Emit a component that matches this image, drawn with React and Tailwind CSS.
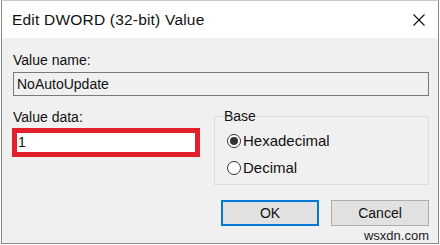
export default function App() {
  const font = { fontFamily: '"Liberation Sans", Arial, sans-serif' };
  return (
    <div className="w-[440px] h-[245px] bg-white relative overflow-hidden" style={font}>
      <div className="ml-[1px] w-[438px] h-[244px] border-x border-b border-t border-[#8a8a8a] border-t-[#c8c8c8] flex flex-col">
        <div className="h-[37px] bg-white flex items-center justify-between pl-[10px] pr-[10px] shrink-0">
          <span className="text-[15.5px] text-[#111] tracking-[0.2px]">Edit DWORD (32-bit) Value</span>
          <svg width="12" height="12" viewBox="0 0 12 12" className="mr-[3px]">
            <path d="M0.5 0.5 L11.5 11.5 M11.5 0.5 L0.5 11.5" stroke="#111" strokeWidth="1.1" />
          </svg>
        </div>
        <div className="flex-1 bg-[#f0f0f0] pl-[11px] pr-[9px] flex flex-col text-[14px] text-[#111]">
          <div className="mt-[14px] leading-[17px]">Value name:</div>
          <div className="mt-[3px] h-[24px] border border-[#7a7a7a] bg-[#f0f0f0] flex items-center pl-[3px] leading-none">NoAutoUpdate</div>
          <div className="flex mt-[20px] justify-between">
            <div className="flex flex-col">
              <div className="leading-[17px] -mt-[7px]">Value data:</div>
              <div className="mt-[2px] -ml-[1px] w-[188px] h-[29px] border-[5px] border-[#e2202c] bg-white flex items-center pl-[1px]">1</div>
            </div>
            <fieldset className="w-[215px] h-[77px] border border-[#dcdcdc] -mt-[8px] px-[12px]">
              <legend className="ml-[-4px] px-[1px] leading-[16px]">Base</legend>
              <div className="flex items-center mt-[9px] gap-[2px]">
                <span className="w-[14px] h-[14px] rounded-full border border-[#333] bg-white flex items-center justify-center">
                  <span className="w-[8px] h-[8px] rounded-full bg-[#333]"></span>
                </span>
                <span className="leading-[16px] text-[15px]">Hexadecimal</span>
              </div>
              <div className="flex items-center mt-[11px] gap-[2px]">
                <span className="w-[14px] h-[14px] rounded-full border border-[#333] bg-white"></span>
                <span className="leading-[16px] text-[15px]">Decimal</span>
              </div>
            </fieldset>
          </div>
          <div className="flex justify-end gap-[12px] mt-[15px] pr-0">
            <button className="w-[98px] h-[26px] border-2 border-[#0078d7] bg-[#e1e1e1] text-[14px] leading-none">OK</button>
            <button className="w-[98px] h-[26px] border border-[#adadad] bg-[#e1e1e1] text-[14px] leading-none">Cancel</button>
          </div>
        </div>
      </div>
      <span className="absolute right-[11px] bottom-[2px] text-[13px] leading-[14px] text-[#222]">wsxdn.com</span>
    </div>
  );
}
